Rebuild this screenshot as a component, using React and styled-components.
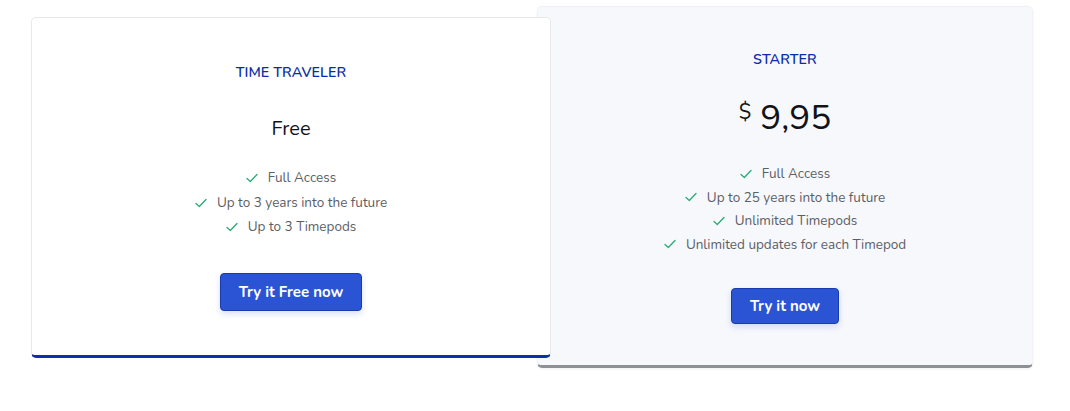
import React from "react";
import styled, { createGlobalStyle } from "styled-components";

const Global = createGlobalStyle`
  html, body { margin: 0; padding: 0; background: #ffffff; }
  body { font-family: "Nunito", "Lato", "Noto Sans", sans-serif; }
  * { box-sizing: border-box; }
`;

const Page = styled.div`
  display: flex;
  align-items: flex-start;
  padding-left: 31px;
  width: 1070px;
  height: 411px;
`;

const Card = styled.div`
  position: relative;
  display: flex;
  flex-direction: column;
  align-items: center;
  text-align: center;
  border-radius: 5px;
  ${(p) =>
    p.$featured
      ? `
    z-index: 0;
    width: 496px;
    margin-top: 6px;
    margin-left: -14px;
    padding: 43px 0 41px;
    background: #f6f8fc;
    border: 1px solid #f0f2f7;
    border-bottom: 3px solid #8e9097;
    box-shadow: 0 1px 3px rgba(0,0,0,0.06);
  `
      : `
    z-index: 1;
    width: 520px;
    margin-top: 17px;
    padding: 45px 0 44px;
    background: #ffffff;
    border: 1px solid #e8e8ea;
    border-bottom: 3px solid #0b2fae;
  `}
`;

const PlanName = styled.div`
  font-size: 14.3px;
  line-height: 20px;
  font-weight: 600;
  color: #0b2ca8;
  letter-spacing: 0.1px;
`;

const Price = styled.div`
  display: flex;
  align-items: flex-start;
  justify-content: center;
  color: #111318;
  font-weight: 400;
  ${(p) =>
    p.$big
      ? `font-size: 35px; line-height: 40px; margin-top: 28px;`
      : `font-size: 20px; line-height: 30px; margin-top: 31px;`}
`;

const Currency = styled.span`
  font-size: 21px;
  line-height: 24px;
  margin-right: 9px;
  margin-top: 2px;
`;

const Features = styled.ul`
  list-style: none;
  margin: ${(p) => (p.$big ? "24px 0 0" : "22px 0 0")};
  padding: 0;
  display: flex;
  flex-direction: column;
  align-items: center;
`;

const Feature = styled.li`
  display: flex;
  align-items: center;
  gap: 10px;
  font-size: 13.5px;
  line-height: ${(p) => (p.$big ? "23.5px" : "24.5px")};
  color: #5b5e66;
`;

const Check = styled.svg`
  width: 12px;
  height: 10px;
  flex: none;
`;

const Button = styled.button`
  font-family: inherit;
  font-size: 15px;
  font-weight: 700;
  color: #ffffff;
  background: #2b54d5;
  border: 1px solid #1a3bb0;
  border-radius: 4px;
  padding: 0 18px;
  height: ${(p) => (p.$big ? "36px" : "38px")};
  margin-top: ${(p) => (p.$big ? "32px" : "33px")};
  box-shadow: 0 3px 6px rgba(43, 84, 213, 0.18);
  cursor: pointer;
`;

const CheckIcon = () => (
  <Check viewBox="0 0 12 10">
    <polyline
      points="1,5.5 4.3,8.5 11,1.5"
      fill="none"
      stroke="#2aab73"
      strokeWidth="1.3"
      strokeLinecap="round"
      strokeLinejoin="round"
    />
  </Check>
);

const plans = [
  {
    name: "TIME TRAVELER",
    price: "Free",
    features: ["Full Access", "Up to 3 years into the future", "Up to 3 Timepods"],
    cta: "Try it Free now",
  },
  {
    name: "STARTER",
    currency: "$",
    price: "9,95",
    featured: true,
    features: [
      "Full Access",
      "Up to 25 years into the future",
      "Unlimited Timepods",
      "Unlimited updates for each Timepod",
    ],
    cta: "Try it now",
  },
];

export default function App() {
  return (
    <>
      <Global />
      <Page>
        {plans.map((p) => (
          <Card key={p.name} $featured={p.featured}>
            <PlanName>{p.name}</PlanName>
            <Price $big={p.featured}>
              {p.currency && <Currency>{p.currency}</Currency>}
              {p.price}
            </Price>
            <Features $big={p.featured}>
              {p.features.map((f) => (
                <Feature key={f} $big={p.featured}>
                  <CheckIcon />
                  {f}
                </Feature>
              ))}
            </Features>
            <Button $big={p.featured}>{p.cta}</Button>
          </Card>
        ))}
      </Page>
    </>
  );
}
